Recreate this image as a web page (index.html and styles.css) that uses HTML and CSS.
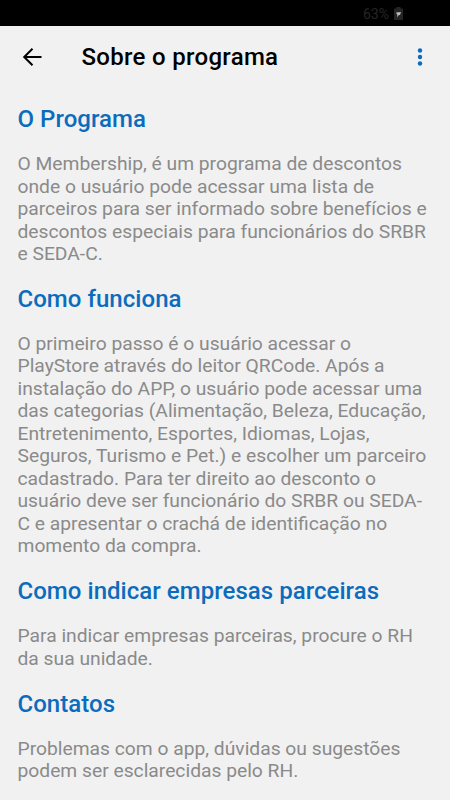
FILE: index.html
```html
<!DOCTYPE html>
<html lang="pt-BR">
<head>
    <meta charset="UTF-8">
    <meta name="viewport" content="width=device-width, initial-scale=1.0">
    <title>Sobre o programa</title>
    <link rel="stylesheet" href="styles.css">
</head>
<body>
    <!-- Barra de status -->
    <div class="status">
        <span>63%</span>
        <svg class="bateria" width="9" height="13" viewBox="0 0 9 13">
            <path d="M2.500 0h4v1.500H9V13H0V1.500h2.500z" fill="#252525"/>
            <path d="M2 5.500l5-.5-1 3-1.500.3L3 10.500l.3-2.500z" fill="#bbb"/>
        </svg>
    </div>

    <!-- Barra de titulo -->
    <header class="topo">
        <svg class="voltar" width="20" height="18" viewBox="0 0 20 18" fill="none" stroke="#000" stroke-width="2">
            <path d="M10.500 .7L2.200 9l8.300 8.300M2 9H19.500"/>
        </svg>
        <h1 class="titulo">Sobre o programa</h1>
        <svg class="menu" width="6" height="20" viewBox="0 0 6 20" fill="#0b6cbd">
            <circle cx="3" cy="3.500" r="2.200"/>
            <circle cx="3" cy="10" r="2.200"/>
            <circle cx="3" cy="16.500" r="2.200"/>
        </svg>
    </header>

    <main class="conteudo">
        <section class="secao">
            <h2>O Programa</h2>
            <p>O Membership, é um programa de descontos<br>
            onde o usuário pode acessar uma lista de<br>
            parceiros para ser informado sobre benefícios e<br>
            descontos especiais para funcionários do SRBR<br>
            e SEDA-C.</p>
        </section>

        <section class="secao">
            <h2>Como funciona</h2>
            <p>O primeiro passo é o usuário acessar o<br>
            PlayStore através do leitor QRCode. Após a<br>
            instalação do APP, o usuário pode acessar uma<br>
            das categorias (Alimentação, Beleza, Educação,<br>
            Entretenimento, Esportes, Idiomas, Lojas,<br>
            Seguros, Turismo e Pet.) e escolher um parceiro<br>
            cadastrado. Para ter direito ao desconto o<br>
            usuário deve ser funcionário do SRBR ou SEDA-<br>
            C e apresentar o crachá de identificação no<br>
            momento da compra.</p>
        </section>

        <section class="secao">
            <h2>Como indicar empresas parceiras</h2>
            <p>Para indicar empresas parceiras, procure o RH<br>
            da sua unidade.</p>
        </section>

        <section class="secao">
            <h2>Contatos</h2>
            <p>Problemas com o app, dúvidas ou sugestões<br>
            podem ser esclarecidas pelo RH.</p>
        </section>
    </main>
</body>
</html>
```

FILE: styles.css
```css
* {
    margin: 0;
    padding: 0;
    box-sizing: border-box;
}

body {
    height: 800px;
    overflow: hidden;
    background-color: #f1f1f1;
    font-family: Roboto, "Liberation Sans", sans-serif;
}

.status {
    display: flex;
    justify-content: flex-end;
    align-items: center;
    gap: 5px;
    height: 26px;
    padding: 1px 47px 0 0;
    background-color: #000;
    color: #252525;
    font-size: 14px;
}

.topo {
    display: flex;
    align-items: center;
    height: 62px;
    padding: 0 27px 0 22px;
}

.titulo {
    flex: 1;
    margin-left: 39.5px;
    color: #000;
    font-size: 24px;
    font-weight: 500;
    line-height: 30px;
    letter-spacing: 0.3px;
    white-space: nowrap;
}

.conteudo {
    padding: 16px 0 0 17.5px;
    white-space: nowrap;
}

.secao {
    margin-bottom: 18.4px;
}

.secao h2 {
    margin-bottom: 19px;
    color: #0b6cbd;
    font-size: 24px;
    font-weight: 500;
    line-height: 30px;
    letter-spacing: 0.04px;
}

.secao p {
    color: #8a8a8a;
    font-size: 19.25px;
    line-height: 22.5px;
}
```
